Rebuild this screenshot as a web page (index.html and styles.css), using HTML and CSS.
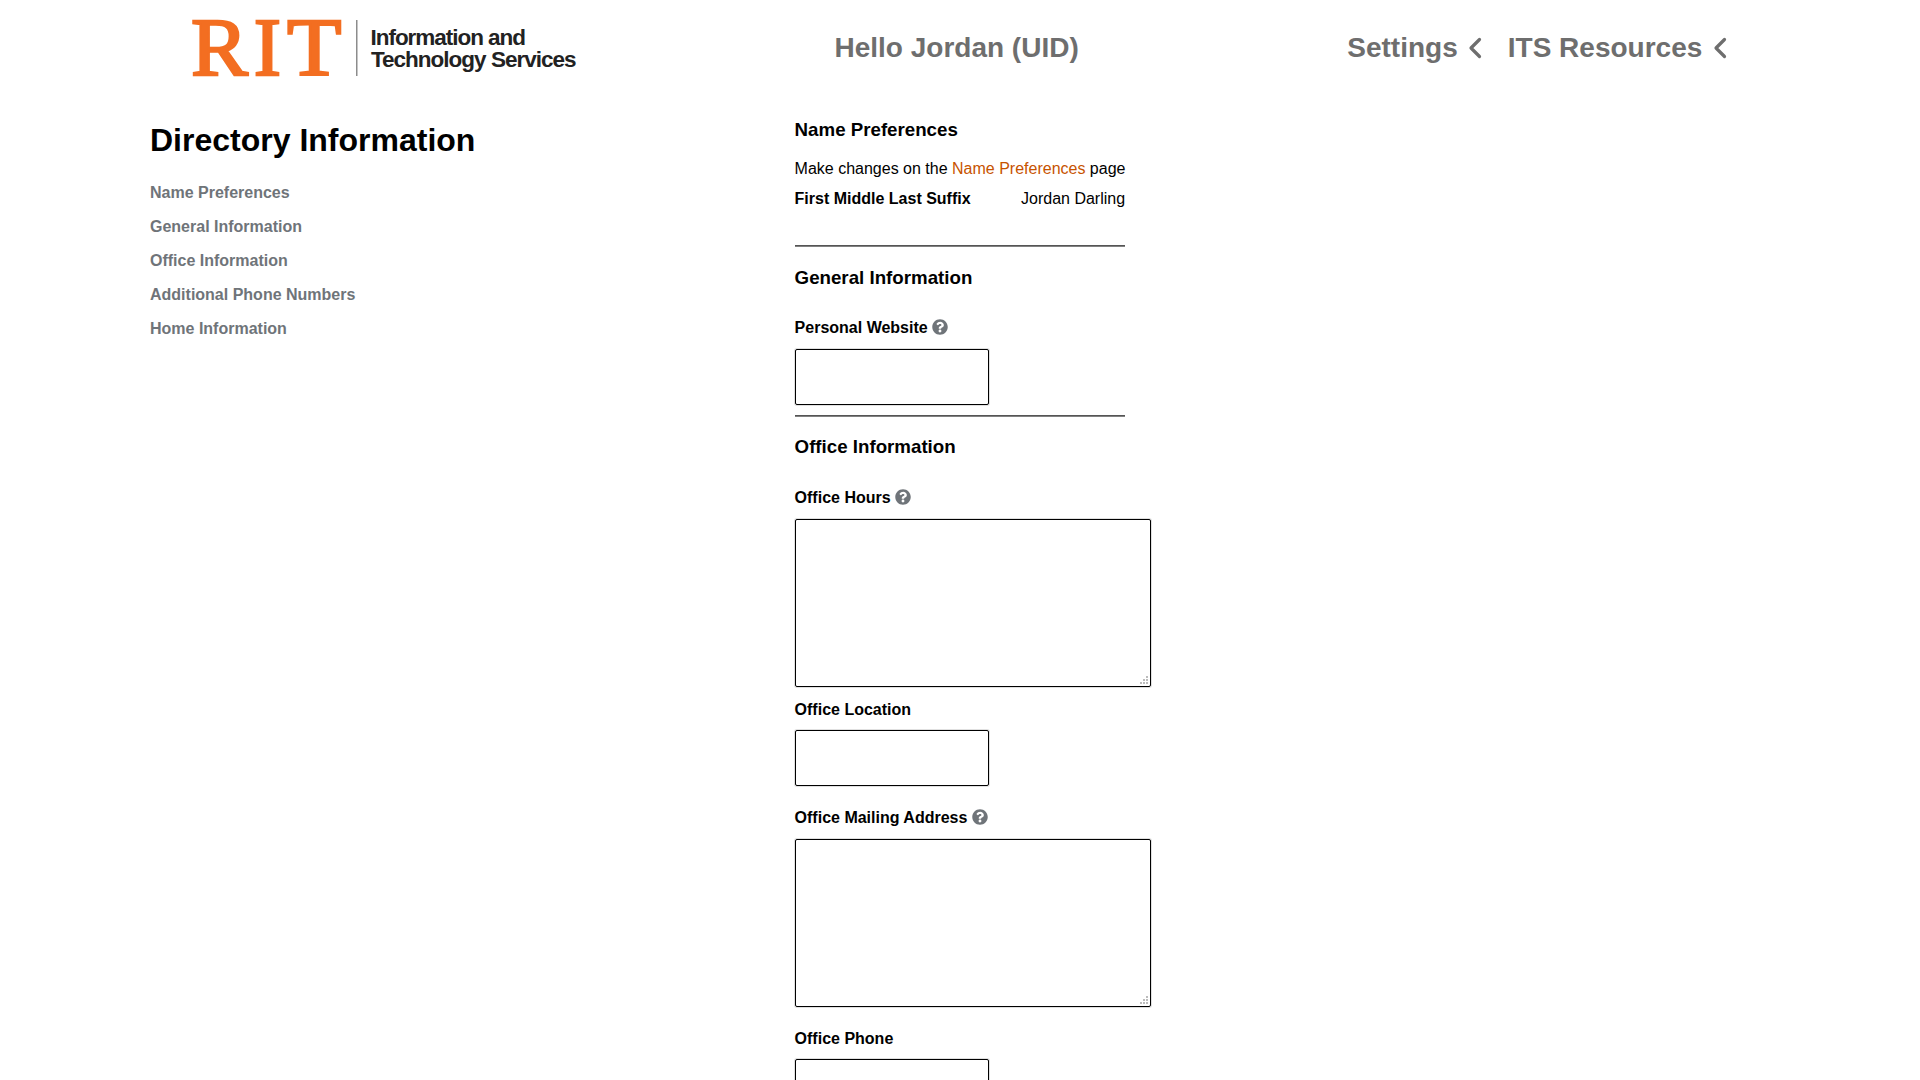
FILE: index.html
```html
<!DOCTYPE html>
<html lang="en">
<head>
<meta charset="utf-8">
<title>Directory Information</title>
<link rel="stylesheet" href="styles.css">
</head>
<body>
<svg width="0" height="0" class="defs" aria-hidden="true">
  <symbol id="help" viewBox="0 0 512 512"><path fill="currentColor" d="M504 256c0 137-111 248-248 248S8 393 8 256 119 8 256 8s248 111 248 248zM262.700 90c-54.500 0-89.300 23-116.500 63.800-3.500 5.300-2.400 12.400 2.700 16.300l34.700 26.300c5.200 3.900 12.600 3 16.700-2.100 17.900-22.700 30.100-35.800 57.300-35.800 20.400 0 45.700 13.100 45.700 33 0 15-12.400 22.700-32.500 34C247.100 238.500 216 254.900 216 296v4c0 6.600 5.400 12 12 12h56c6.600 0 12-5.400 12-12v-1.300c0-28.500 83.200-29.600 83.200-106.700 0-58-60.200-102-116.500-102zM256 338c-25.400 0-46 20.600-46 46s20.600 46 46 46 46-20.600 46-46-20.600-46-46-46z"/></symbol>
  <symbol id="chevron" viewBox="0 0 14 22"><path d="M11.500 2.500 3 11l8.500 8.500" fill="none" stroke="currentColor" stroke-width="3.200" stroke-linecap="round" stroke-linejoin="round"/></symbol>
</svg>
<header class="header">
  <svg class="logo" width="400" height="60" viewBox="0 0 400 60" role="img" aria-label="RIT Information and Technology Services">
    <g class="logo-mark">
      <text x="-1" y="57" textLength="57" lengthAdjust="spacingAndGlyphs">R</text>
      <text x="61.800" y="57">I</text>
      <text x="95" y="57" textLength="54.500" lengthAdjust="spacingAndGlyphs">T</text>
    </g>
    <rect x="164" y="2" width="1.500" height="56" fill="#8c8c8c"/>
    <g class="logo-name">
      <text x="178.500" y="27" textLength="155.500" lengthAdjust="spacing">Information and</text>
      <text x="179" y="49" textLength="205.500" lengthAdjust="spacing">Technology Services</text>
    </g>
  </svg>
  <div class="greeting">Hello Jordan (UID)</div>
  <nav class="menu">
    <a>Settings <svg class="chevron"><use href="#chevron"/></svg></a>
    <a>ITS Resources <svg class="chevron"><use href="#chevron"/></svg></a>
  </nav>
</header>
<div class="layout">
  <aside class="sidebar">
    <h1>Directory Information</h1>
    <ul>
      <li>Name Preferences</li>
      <li>General Information</li>
      <li>Office Information</li>
      <li>Additional Phone Numbers</li>
      <li>Home Information</li>
    </ul>
  </aside>
  <main class="content">
    <section class="names">
      <h3>Name Preferences</h3>
      <p>Make changes on the <a class="link">Name Preferences</a> page</p>
      <div class="name-row"><b>First Middle Last Suffix</b><span>Jordan Darling</span></div>
    </section>
    <hr>
    <section class="general">
      <h3>General Information</h3>
      <label>Personal Website <svg class="help"><use href="#help"/></svg></label>
      <input type="text">
    </section>
    <hr>
    <section class="office">
      <h3>Office Information</h3>
      <label>Office Hours <svg class="help"><use href="#help"/></svg></label>
      <div class="area"><textarea></textarea><svg class="grip" viewBox="0 0 8 8"><path d="M6 0h2v2H6zM3 3h2v2H3zM6 3h2v2H6zM0 6h2v2H0zM3 6h2v2H3zM6 6h2v2H6z" fill="#bcbcbc"/></svg></div>
      <label class="after-area">Office Location</label>
      <input type="text" class="tight">
      <label class="after-input">Office Mailing Address <svg class="help"><use href="#help"/></svg></label>
      <div class="area"><textarea></textarea><svg class="grip" viewBox="0 0 8 8"><path d="M6 0h2v2H6zM3 3h2v2H3zM6 3h2v2H6zM0 6h2v2H0zM3 6h2v2H3zM6 6h2v2H6z" fill="#bcbcbc"/></svg></div>
      <label class="phone">Office Phone</label>
      <input type="text" class="tight">
    </section>
  </main>
</div>
</body>
</html>
```
FILE: styles.css
```css
* { box-sizing: border-box; }
body {
  margin: 0;
  height: 1080px;
  overflow: hidden;
  background: #fff;
  color: #000;
  font: 16px/20px "Liberation Sans", Arial, sans-serif;
}
.defs { display: block; }
.header {
  display: grid;
  grid-template-columns: 642.500px 495.500px 1fr;
  align-items: center;
  height: 96px;
  padding-left: 192px;
  color: #6e6e6e;
  font-size: 28px;
  font-weight: bold;
  line-height: 32px;
}
.logo { display: block; overflow: visible; }
.logo-mark {
  fill: #f36e21;
  stroke: #f36e21;
  stroke-width: 2.300px;
  font: 82px "Liberation Serif", serif;
}
.logo-name {
  fill: #222;
  font: bold 22.500px "Liberation Sans", sans-serif;
}
.greeting { white-space: nowrap; }
.menu { display: flex; gap: 25.500px; padding-left: 17.300px; }
.menu a { display: flex; align-items: center; gap: 10.500px; white-space: nowrap; }
.chevron { width: 14px; height: 22px; }

.layout {
  display: grid;
  grid-template-columns: 644.600px 357px;
  padding-left: 150px;
}
h1 { margin: 26px 0 25px; font-size: 32px; line-height: 36px; }
ul { margin: 0; padding: 0; list-style: none; }
li {
  height: 34px;
  color: #6f7479;
  font-weight: bold;
}
.content { padding-top: 23px; }
h3 { margin: 0; font-size: 18.720px; line-height: 22px; }
p { margin: 0; white-space: nowrap; }
.names { width: 330.500px; height: 126px; }
.names p { margin-top: 18px; }
.link { color: #c75300; }
.name-row { display: flex; justify-content: space-between; margin-top: 10px; }
hr {
  width: 330px;
  height: 2px;
  margin: 0;
  border: 0;
  border-top: 1px solid #555;
  border-bottom: 1px solid #808080;
}
.general { height: 168px; padding-top: 20px; }
.office { padding-top: 19px; }
.office h3 { margin-bottom: 30px; }
label {
  display: flex;
  align-items: center;
  gap: 4.500px;
  height: 20px;
  margin-top: 29px;
  font-weight: bold;
}
.help { width: 16px; height: 16px; margin-top: -2px; color: #6f7479; }
input, textarea {
  display: block;
  margin: 11px 0 0;
  border: 1px solid #000;
  border-radius: 2px;
  background: #fff;
  box-shadow: 0 0 0 1px rgba(0, 0, 0, 0.12);
}
input { width: 194px; height: 56px; }
textarea { width: 356px; height: 168px; resize: none; }
.tight { margin-top: 10px; }
.area { position: relative; }
.grip { position: absolute; right: 4px; bottom: 3px; width: 8px; height: 8px; }
.after-area { margin-top: 13px; }
.after-input { margin-top: 22px; }
.phone { margin-top: 22px; }
```
